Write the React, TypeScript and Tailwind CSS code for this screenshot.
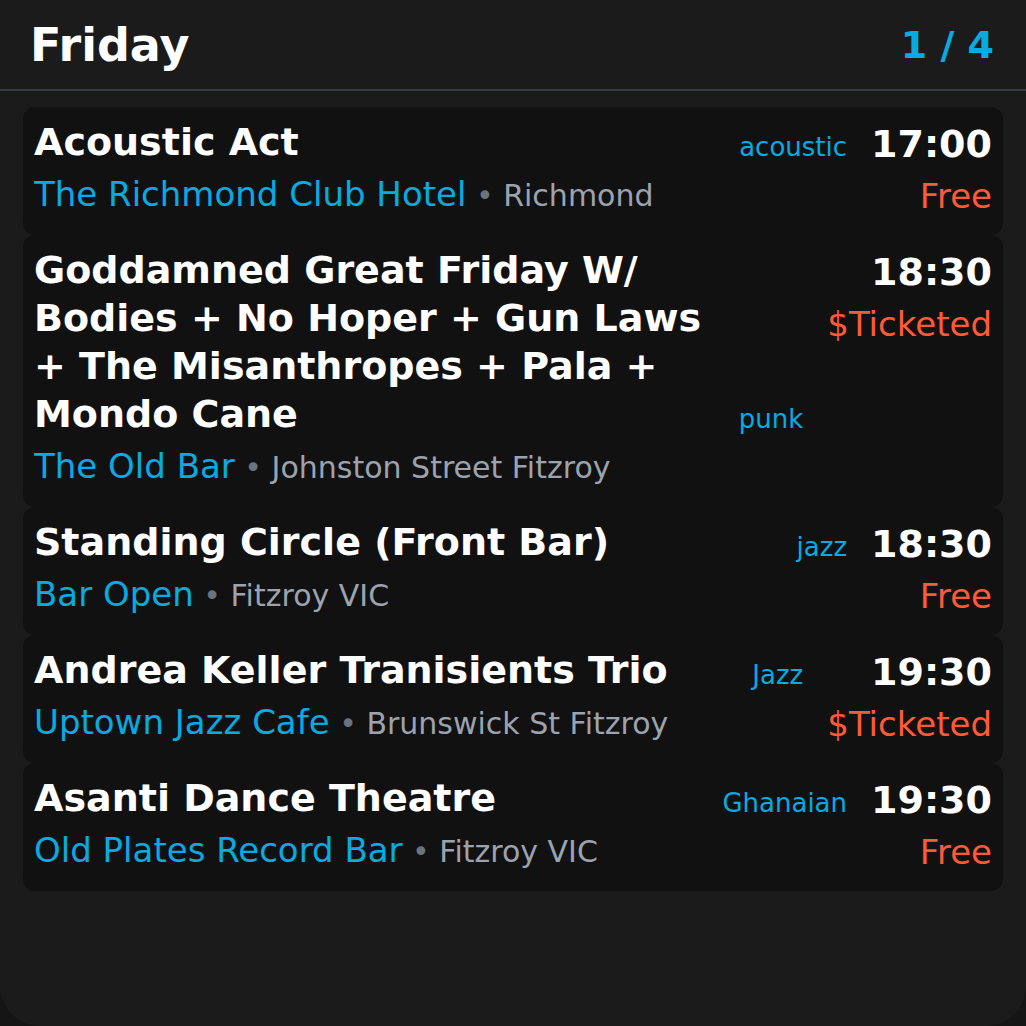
const events = [
  {
    title: "Acoustic Act",
    tag: "acoustic",
    time: "17:00",
    price: "Free",
    venue: "The Richmond Club Hotel",
    area: "Richmond",
  },
  {
    title: "Goddamned Great Friday W/ Bodies + No Hoper + Gun Laws + The Misanthropes + Pala + Mondo Cane",
    tag: "punk",
    time: "18:30",
    price: "$Ticketed",
    venue: "The Old Bar",
    area: "Johnston Street Fitzroy",
  },
  {
    title: "Standing Circle (Front Bar)",
    tag: "jazz",
    time: "18:30",
    price: "Free",
    venue: "Bar Open",
    area: "Fitzroy VIC",
  },
  {
    title: "Andrea Keller Tranisients Trio",
    tag: "Jazz",
    time: "19:30",
    price: "$Ticketed",
    venue: "Uptown Jazz Cafe",
    area: "Brunswick St Fitzroy",
  },
  {
    title: "Asanti Dance Theatre",
    tag: "Ghanaian",
    time: "19:30",
    price: "Free",
    venue: "Old Plates Record Bar",
    area: "Fitzroy VIC",
  },
];

function EventCard({ e }: { e: (typeof events)[number] }) {
  return (
    <div className="flex gap-6 rounded-xl bg-[#111111] px-[11px] pt-[11px] pb-[15px]">
      <div className="flex min-w-0 flex-1 flex-col justify-between">
        <div className="flex items-end justify-between gap-3">
          <div className="text-[38px] font-bold leading-[48px] text-white">{e.title}</div>
          <div className="shrink-0 text-[26px] leading-[38px] text-[#06abe2]">{e.tag}</div>
        </div>
        <div className="mt-[4px] truncate text-[34px] leading-[48px]">
          <span className="text-[#06abe2]">{e.venue}</span>
          <span className="text-[30px] text-[#6b7280]"> • </span>
          <span className="text-[30px] text-[#9ca3af]">{e.area}</span>
        </div>
      </div>
      <div className="flex shrink-0 flex-col items-end">
        <div className="text-[38px] font-bold leading-[52px] text-white">{e.time}</div>
        <div className="mt-[2px] text-[34px] leading-[48px] text-[#ff5a36]">{e.price}</div>
      </div>
    </div>
  );
}

export default function App() {
  return (
    <div className="min-h-[1026px] bg-[#151515] font-['DejaVu_Sans',sans-serif]">
      <div className="h-[1026px] overflow-hidden rounded-b-[40px] bg-[#1b1b1b]">
        <div className="flex h-[91px] items-center justify-between border-b-2 border-[#363b45] px-[30px] pt-[2px]">
          <h1 className="text-[46px] font-bold text-white">Friday</h1>
          <div className="pr-[2px] text-[38px] font-bold text-[#06abe2]">1 / 4</div>
        </div>
        <div className="mx-[23px] mt-4 flex flex-col">
          {events.map((e, i) => (
            <EventCard key={i} e={e} />
          ))}
        </div>
      </div>
    </div>
  );
}
